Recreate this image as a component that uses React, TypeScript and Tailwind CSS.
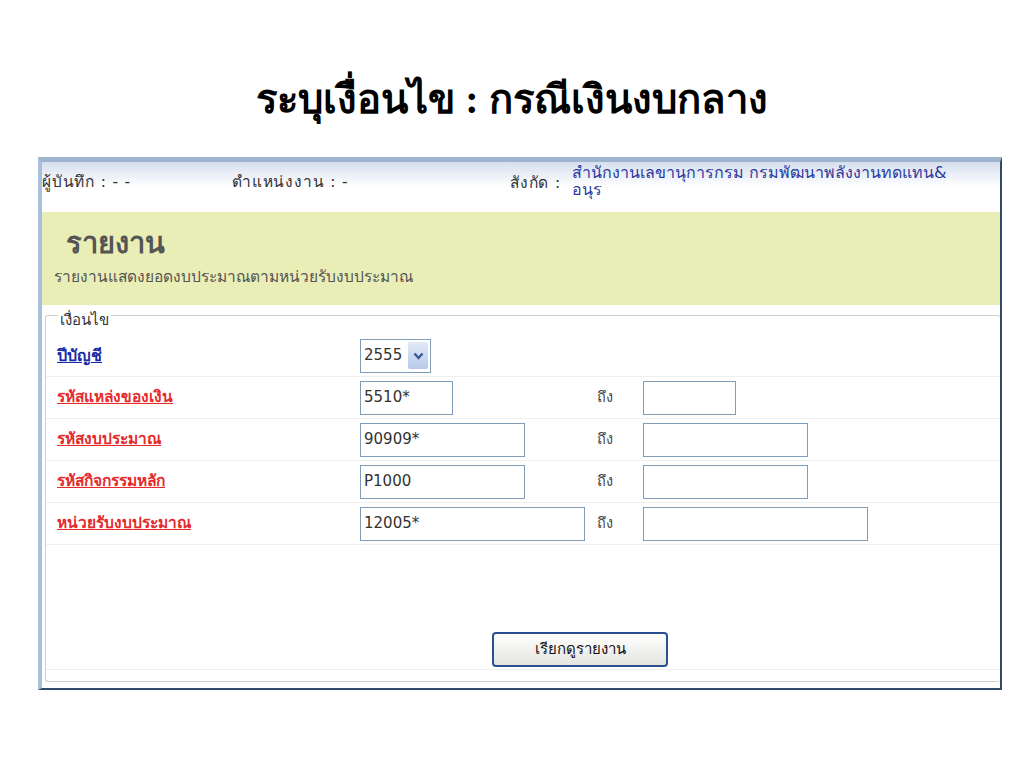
import React from "react";

const rows = [
  { label: "รหัสแหล่งของเงิน", value: "5510*", w1: "w-[93px]", w2: "w-[93px]" },
  { label: "รหัสงบประมาณ", value: "90909*", w1: "w-[165px]", w2: "w-[165px]" },
  { label: "รหัสกิจกรรมหลัก", value: "P1000", w1: "w-[165px]", w2: "w-[165px]" },
  { label: "หน่วยรับงบประมาณ", value: "12005*", w1: "w-[225px]", w2: "w-[225px]" },
];

export default function App() {
  return (
    <div className="w-[1024px] h-[768px] bg-white overflow-hidden" style={{ fontFamily: "Tahoma, 'DejaVu Sans', 'Noto Sans', sans-serif" }}>
      <h1
        className="pt-[72px] h-[157px] text-center text-[40px] font-bold text-black leading-[56px]"
        style={{ fontFamily: "'Liberation Serif', 'DejaVu Serif', serif" }}
      >
        ระบุเงื่อนไข : กรณีเงินงบกลาง
      </h1>
      <div className="ml-[38px] w-[964px] h-[533px] border-l-[4px] border-l-[#a9bfdc] border-t-[5px] border-t-[#9fb3cf] border-r-2 border-r-[#2f4a6b] border-b-2 border-b-[#2f4a6b] flex flex-col">
        <div className="h-[50px] bg-gradient-to-b from-[#d6dfee] via-white to-white flex items-start pt-[9px] text-[15.5px] tracking-[0.8px] text-[#333]">
          <div className="w-[190px]">ผู้บันทึก : - -</div>
          <div className="w-[278px]">ตำแหน่งงาน : -</div>
          <div className="flex items-start">
            <span className="mt-[1px] w-[62px]">สังกัด :</span>
            <span className="text-[#2b3aa0] text-[16px] tracking-normal leading-[17px] -mt-[7px] w-[420px]">
              สำนักงานเลขานุการกรม กรมพัฒนาพลังงานทดแทน&amp;<br />อนุร
            </span>
          </div>
        </div>
        <div className="h-[93px] bg-[#e9eeb6] pl-[12px] pt-[13px]">
          <div className="pl-[12px] text-[29px] font-bold text-[#555] leading-[36px]">รายงาน</div>
          <div className="text-[15.5px] text-[#555] mt-[6px] leading-[20px]">รายงานแสดงยอดงบประมาณตามหน่วยรับงบประมาณ</div>
        </div>
        <fieldset className="ml-[3px] mt-[2px] flex-1 border border-[#cfcfc4] border-r-0 rounded-[3px] min-w-0">
          <legend className="ml-[12px] px-[2px] text-[15px] text-[#333] leading-[16px]">
            <span className="relative top-[5px]">เงื่อนไข</span>
          </legend>
          <div className="flex items-center h-[42px] border-b border-[#eef0ee] mt-[12px]">
            <div className="w-[314px] pl-[11px]">
              <span className="text-[16px] font-bold text-[#1b2aa8] underline">ปีบัญชี</span>
            </div>
            <div className="h-[34px] w-[71px] border border-[#7f9db9] flex items-center justify-between pl-[3px] pr-[2px] text-[15px] text-[#333]">
              <span>2555</span>
              <span className="w-[20px] h-[27px] bg-gradient-to-b from-[#e2eaf8] to-[#b7c9ea] rounded-[2px] flex items-center justify-center">
                <svg width="11" height="8" viewBox="0 0 11 8"><path d="M1.5 1.5 L5.5 6 L9.5 1.5" stroke="#3b5a99" strokeWidth="2.4" fill="none" /></svg>
              </span>
            </div>
          </div>
          {rows.map((r) => (
            <div key={r.label} className="flex items-center h-[42px] border-b border-[#eef0ee]">
              <div className="w-[314px] pl-[11px]">
                <span className="text-[15.5px] font-bold text-[#e52b2b] underline">{r.label}</span>
              </div>
              <div className="w-[237px]">
                <div className={`${r.w1} h-[34px] border border-[#7f9db9] flex items-center pl-[3px] text-[15px] text-[#333]`}>{r.value}</div>
              </div>
              <div className="w-[46px] text-[14.5px] text-[#444]">ถึง</div>
              <div className={`${r.w2} h-[34px] border border-[#7f9db9]`}></div>
            </div>
          ))}
          <div className="h-[87px]"></div>
          <div className="flex pl-[446px] pb-[2px] border-b border-[#eef0ee]">
            <button className="w-[176px] h-[35px] rounded-[4px] border-2 border-[#2c4f8f] bg-gradient-to-b from-white to-[#e4e4e0] text-[15px] text-[#111]">
              เรียกดูรายงาน
            </button>
          </div>
        </fieldset>
        <div className="h-[6px]"></div>
      </div>
    </div>
  );
}
